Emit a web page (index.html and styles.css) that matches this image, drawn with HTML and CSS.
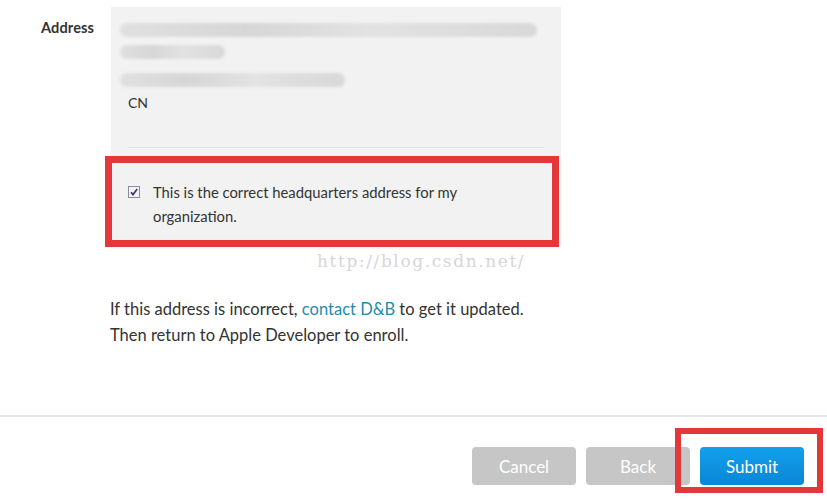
FILE: index.html
```html
<!DOCTYPE html>
<html>
<head>
<meta charset="utf-8">
<link rel="stylesheet" href="styles.css">
</head>
<body>
<div class="page">
  <div class="field">
    <div class="label">Address</div>
    <div class="panel">
      <div class="addr">
        <div class="blur b1"></div>
        <div class="blur b2"></div>
        <div class="blur b3"></div>
        <div class="cn">CN</div>
      </div>
      <div class="divider"></div>
      <div class="confirm">
        <span class="check"><svg width="12" height="12" viewBox="0 0 12 12"><rect x="0.5" y="0.5" width="11" height="11" fill="#f4f4f8" stroke="#8a8aa0"/><path d="M3 6.2 L5 8.6 L9.2 3" fill="none" stroke="#34346c" stroke-width="1.6"/></svg></span>
        <span class="confirm-text">This is the correct headquarters address for my organization.</span>
      </div>
      <div class="mark mark-confirm"></div>
    </div>
  </div>
  <div class="watermark">http://blog.csdn.net/</div>
  <p class="note">If this address is incorrect, <a class="link">contact D&amp;B</a> to get it updated.<br>Then return to Apple Developer to enroll.</p>
  <div class="footer">
    <button class="btn gray">Cancel</button>
    <button class="btn gray">Back</button>
    <button class="btn blue">Submit<span class="mark mark-submit"></span></button>
  </div>
</div>
</body>
</html>
```
FILE: styles.css
```css
html, body { margin: 0; padding: 0; background: #fff; }
body { font-family: Lato, "Open Sans", sans-serif; color: #333; width: 827px; height: 499px; overflow: hidden; }
.page { position: relative; }
.field { display: flex; padding-top: 7px; }
.label { width: 111px; box-sizing: border-box; padding-left: 41px; padding-top: 12px; font-size: 14.6px; font-weight: 700; color: #333; letter-spacing: 0.1px; }
.panel { position: relative; width: 450px; height: 239px; background: #f2f2f2; }
.addr { padding: 12px 0 0 9px; height: 130px; box-sizing: border-box; }
.blur { height: 14px; border-radius: 7px; background: linear-gradient(90deg, #e0e0e0, #d6d6d6 30%, #e2e2e2 60%, #d8d8d8); filter: blur(1.5px); }
.b1 { width: 417px; margin-top: 4px; }
.b2 { width: 105px; margin-top: 8px; }
.b3 { width: 225px; margin-top: 14px; }
.cn { font-size: 14px; margin: 7px 0 0 8px; color: #333; }
.divider { height: 1px; background: #e4e4e4; margin: 10px 17px 0 17px; }
.confirm { display: flex; align-items: flex-start; padding: 32px 60px 0 17px; }
.check { display: block; width: 12px; height: 12px; margin-top: 6px; }
.check svg { display: block; }
.confirm-text { margin-left: 13px; font-size: 14.8px; line-height: 24px; color: #333; }
.mark { position: absolute; border: 7px solid #e2383a; box-sizing: border-box; pointer-events: none; }
.mark-confirm { left: -6px; top: 149px; width: 454px; height: 91px; }
.watermark { margin: 5px 0 0 317px; font-family: "DejaVu Serif", serif; font-size: 17px; color: #d6d6d6; letter-spacing: 1.6px; line-height: 20px; }
.note { margin: 25px 0 0 110px; font-size: 16.5px; line-height: 26px; color: #333; }
.link { color: #1e8cae; text-decoration: none; }
.footer { margin-top: 67px; border-top: 2px solid #e6e6e6; display: flex; justify-content: flex-end; gap: 10px; padding: 30px 23px 0 0; }
.btn { position: relative; width: 104px; height: 38px; border: none; border-radius: 4px; color: #fff; font-family: Lato, "Open Sans", sans-serif; font-size: 17px; padding: 0; }
.gray { background: #c6c6c6; }
.blue { background: linear-gradient(#12a0ec, #0a86d6); }
.mark-submit { left: -25px; top: -19px; width: 148px; height: 65px; border-width: 6px; }
```
